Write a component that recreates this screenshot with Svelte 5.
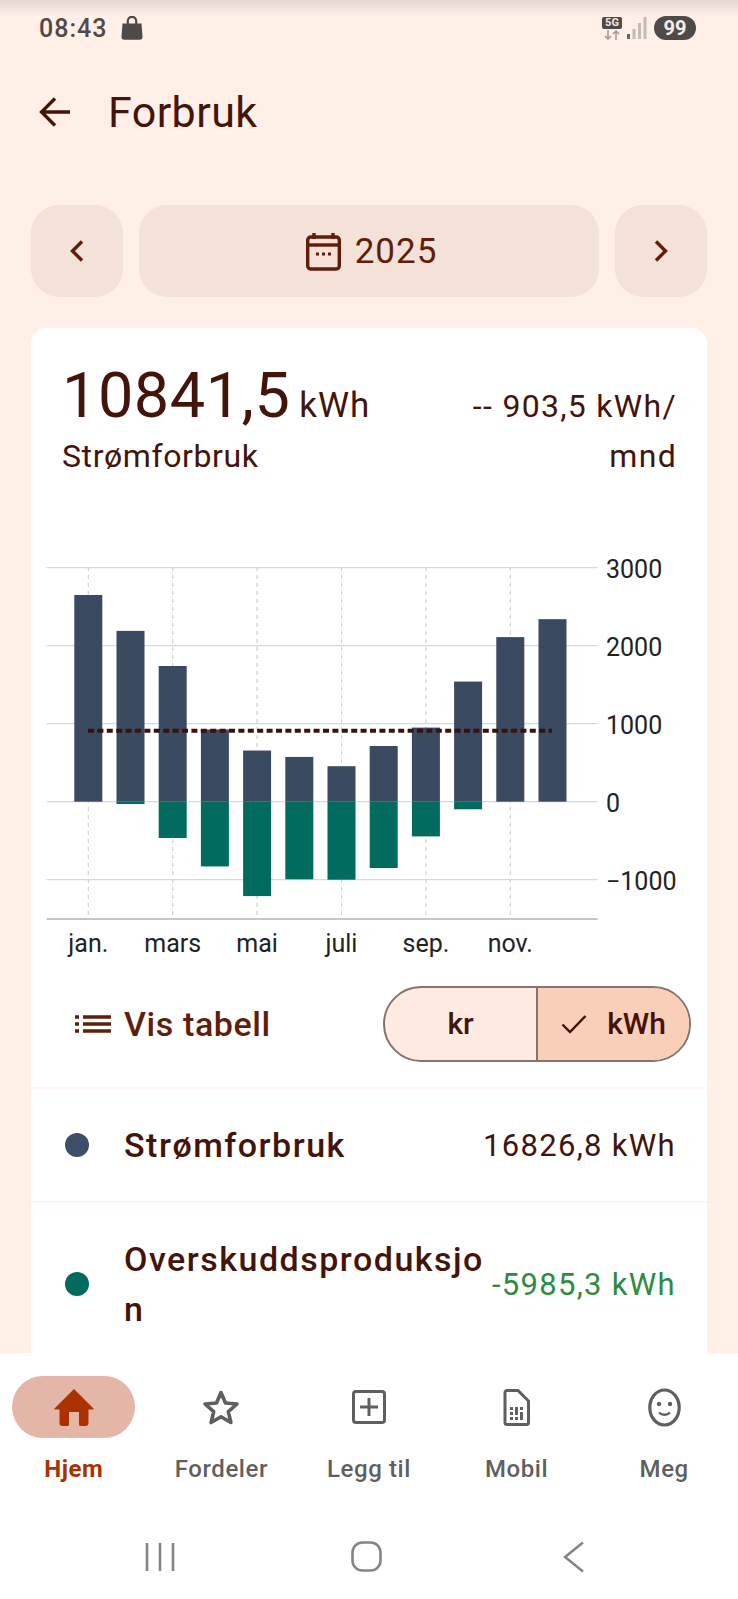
<script>
  // Monthly values in kWh, read off the chart
  const months = [
    { used: 2650, sold: 0, label: 'jan.' },
    { used: 2190, sold: 30 },
    { used: 1740, sold: 465, label: 'mars' },
    { used: 926, sold: 830 },
    { used: 656, sold: 1210, label: 'mai' },
    { used: 574, sold: 995 },
    { used: 455, sold: 1000, label: 'juli' },
    { used: 714, sold: 850 },
    { used: 950, sold: 445, label: 'sep.' },
    { used: 1540, sold: 97 },
    { used: 2110, sold: 0, label: 'nov.' },
    { used: 2340, sold: 0 }
  ]

  const ticks = [3000, 2000, 1000, 0, -1000]
  const zeroY = 261.7
  const perKwh = 0.078
  const firstX = 57.3
  const stepX = 42.2
  const barW = 28
  const avgY = 190.7

  const centerX = (i) => firstX + i * stepX
  const tickY = (v) => zeroY - v * perKwh
  const tickLabel = (v) => (v < 0 ? '−' + Math.abs(v) : String(v))

  const nav = [
    { label: 'Hjem', active: true },
    { label: 'Fordeler' },
    { label: 'Legg til' },
    { label: 'Mobil' },
    { label: 'Meg' }
  ]
</script>

<div class="app">
  <div class="status">
    <span class="time">08:43</span>
    <svg class="bag" viewBox="0 0 22 24" width="22" height="24">
      <path d="M1.500 7.500h19l1 13a3 3 0 0 1-3 3.200H3.500a3 3 0 0 1-3-3.200z" fill="#4f4a47" />
      <path d="M6.800 8V5a4.200 4.200 0 0 1 8.400 0v3" fill="none" stroke="#4f4a47" stroke-width="2.200" />
    </svg>
    <span class="spacer"></span>
    <div class="net">
      <span class="five-g">5G</span>
      <svg viewBox="0 0 20 10" width="20" height="10">
        <path d="M6 0v9M3 6l3 3 3-3M14 10V1M11 4l3-3 3 3" fill="none" stroke="#a39c98" stroke-width="1.600" />
      </svg>
    </div>
    <svg class="signal" viewBox="0 0 20 24" width="20" height="24">
      <rect x="0" y="18" width="3" height="5" fill="#6b6460" />
      <rect x="5.500" y="13" width="3" height="10" fill="#c4bcb7" />
      <rect x="11" y="7" width="3" height="16" fill="#c4bcb7" />
      <rect x="16.500" y="1" width="3" height="22" fill="#c4bcb7" />
    </svg>
    <span class="battery">99</span>
  </div>

  <header class="topbar">
    <svg viewBox="0 0 31 30" width="31" height="30">
      <path d="M31 15H3M16 1.500 2.500 15 16 28.500" fill="none" stroke="#43140a" stroke-width="3.300" />
    </svg>
    <h1>Forbruk</h1>
  </header>

  <div class="date-row">
    <button class="date-btn side" aria-label="Forrige">
      <svg viewBox="0 0 14 22" width="14" height="22">
        <path d="M12 1.500 2.500 11 12 20.500" fill="none" stroke="#5e1e09" stroke-width="3.400" />
      </svg>
    </button>
    <button class="date-btn middle">
      <svg viewBox="0 0 35 39" width="35" height="39">
        <path d="M8 1v6M27 1v6" stroke="#5e1e09" stroke-width="3.400" />
        <rect x="1.700" y="5" width="31.600" height="32" rx="3" fill="none" stroke="#5e1e09" stroke-width="3.400" />
        <path d="M2 13h31" stroke="#5e1e09" stroke-width="3.400" />
        <path d="M10 22h3M16 22h3M22 22h3" stroke="#5e1e09" stroke-width="3" />
      </svg>
      <span>2025</span>
    </button>
    <button class="date-btn side" aria-label="Neste">
      <svg viewBox="0 0 14 22" width="14" height="22">
        <path d="M2 1.500 11.500 11 2 20.500" fill="none" stroke="#5e1e09" stroke-width="3.400" />
      </svg>
    </button>
  </div>

  <main class="card">
    <div class="summary">
      <div class="total">
        <div class="amount"><strong>10841,5</strong> <span>kWh</span></div>
        <div class="caption">Strømforbruk</div>
      </div>
      <div class="average">-- 903,5 kWh/ mnd</div>
    </div>

    <svg class="chart" viewBox="0 0 676 420" width="676" height="420">
      {#each ticks as t}
        <line x1="15.700" x2="566.700" y1={tickY(t)} y2={tickY(t)} stroke="#d8d8d8" stroke-width="1.300" />
        <text x="575" y={tickY(t) + 10} class="tick">{tickLabel(t)}</text>
      {/each}
      {#each months as m, i}
        {#if m.label}
          <line x1={centerX(i)} x2={centerX(i)} y1="27" y2="379" stroke="#cfcfcf" stroke-width="1.200" stroke-dasharray="4 4" />
          <text x={centerX(i)} y="412" text-anchor="middle" class="tick">{m.label}</text>
        {/if}
      {/each}
      <line x1="15.700" x2="566.700" y1="379" y2="379" stroke="#c6c6c6" stroke-width="2" />
      {#each months as m, i}
        <rect x={centerX(i) - barW / 2} y={zeroY - m.used * perKwh} width={barW} height={m.used * perKwh} fill="#3a4a60" />
        <rect x={centerX(i) - barW / 2} y={zeroY} width={barW} height={m.sold * perKwh} fill="#006b5e" />
      {/each}
      <line x1="57" x2="521" y1={avgY} y2={avgY} stroke="#38120e" stroke-width="4" stroke-dasharray="6 3.400" />
    </svg>

    <div class="tools">
      <button class="show-table">
        <svg viewBox="0 0 36 18" width="36" height="18">
          <path d="M0 2h4M0 9h4M0 16h4M8 2h28M8 9h28M8 16h28" stroke="#5e1e09" stroke-width="3.400" />
        </svg>
        <span>Vis tabell</span>
      </button>
      <div class="toggle">
        <span class="seg kr">kr</span>
        <span class="seg kwh">
          <svg viewBox="0 0 26 20" width="26" height="20">
            <path d="M1.500 10.500 9 18 24.500 2" fill="none" stroke="#3f150a" stroke-width="2.400" />
          </svg>
          kWh
        </span>
      </div>
    </div>

    <div class="row">
      <span class="dot navy"></span>
      <span class="name">Strømforbruk</span>
      <span class="value">16826,8 kWh</span>
    </div>
    <div class="row tall">
      <span class="dot teal"></span>
      <span class="name">Overskuddsproduksjo n</span>
      <span class="value green">-5985,3 kWh</span>
    </div>
  </main>

  <nav class="bottom">
    {#each nav as item}
      <div class="nav-item" class:active={item.active}>
        <div class="nav-icon">
          {#if item.label === 'Hjem'}
            <svg viewBox="0 0 40 37" width="40" height="37">
              <path d="M20 0 39.500 19.500a.6.6 0 0 1-.4 1H34.500V34a3 3 0 0 1-3 3h-5a1.500 1.500 0 0 1-1.500-1.500V23H15v12.500a1.500 1.500 0 0 1-1.500 1.500h-5a3 3 0 0 1-3-3V20.500H.9a.6.6 0 0 1-.4-1z" fill="#ab3200" />
            </svg>
          {:else if item.label === 'Fordeler'}
            <svg viewBox="0 0 38 36" width="38" height="36">
              <path d="M19 3.500 23.500 14 35 15 26.300 22.600 28.900 33.500 19 27.700 9.100 33.500 11.700 22.600 3 15 14.500 14z" fill="none" stroke="#5f5f5f" stroke-width="3.600" stroke-linejoin="round" />
            </svg>
          {:else if item.label === 'Legg til'}
            <svg viewBox="0 0 34 34" width="34" height="34">
              <rect x="1.500" y="1.500" width="31" height="31" rx="2.500" fill="none" stroke="#5f5f5f" stroke-width="3" />
              <path d="M17 8v18M8 17h18" stroke="#5f5f5f" stroke-width="3" />
            </svg>
          {:else if item.label === 'Mobil'}
            <svg viewBox="0 0 27 37" width="27" height="37">
              <path d="M4 1.500h11L25.500 12v21.500a2 2 0 0 1-2 2H4a2 2 0 0 1-2-2v-30a2 2 0 0 1 2-2z" fill="none" stroke="#5f5f5f" stroke-width="3" />
              <path d="M7 18h3v3H7zM7 23h3v3H7zM7 28h3v3H7zM12 18h3v8h-3zM12 28h3v3h-3zM17 18h3v3h-3zM17 23h3v8h-3z" fill="#5f5f5f" />
            </svg>
          {:else}
            <svg viewBox="0 0 33 39" width="33" height="39">
              <ellipse cx="16.500" cy="19.500" rx="14.700" ry="17.500" fill="none" stroke="#5f5f5f" stroke-width="3.200" />
              <circle cx="11" cy="16" r="2.200" fill="#5f5f5f" />
              <circle cx="22" cy="16" r="2.200" fill="#5f5f5f" />
              <path d="M11 24.500c3 3 8 3 11 0" fill="none" stroke="#5f5f5f" stroke-width="2.400" />
            </svg>
          {/if}
        </div>
        <span class="nav-label">{item.label}</span>
      </div>
    {/each}
  </nav>

  <div class="sysnav">
    <svg viewBox="0 0 30 30" width="30" height="30">
      <path d="M2 1v28M15 1v28M28 1v28" stroke="#858585" stroke-width="2.600" />
    </svg>
    <svg viewBox="0 0 32 32" width="32" height="32">
      <rect x="1.500" y="1.500" width="28" height="28" rx="10" fill="none" stroke="#858585" stroke-width="2.600" />
    </svg>
    <svg viewBox="0 0 22 32" width="22" height="32">
      <path d="M20 1.500 2 16l18 14.500" fill="none" stroke="#858585" stroke-width="2.600" />
    </svg>
  </div>
</div>

<style>
  :global(body) {
    margin: 0;
    background: #ffefe7;
  }

  .app {
    width: 738px;
    height: 1599px;
    display: flex;
    flex-direction: column;
    overflow: hidden;
    background: #ffefe7;
    font-family: Roboto, sans-serif;
    color: #43140a;
  }

  .status {
    flex: none;
    height: 56px;
    display: flex;
    align-items: center;
    padding: 0 42px 0 39px;
    box-sizing: border-box;
    background: linear-gradient(#e4d8d2, #ffefe7 16px);
  }

  .time {
    font-size: 25px;
    font-weight: 500;
    letter-spacing: 1px;
    color: #4f4a47;
  }

  .bag {
    margin-left: 14px;
  }

  .spacer {
    flex: 1;
  }

  .net {
    display: flex;
    flex-direction: column;
    align-items: center;
    gap: 1px;
    margin-right: 5px;
  }

  .five-g {
    width: 20px;
    height: 12px;
    border-radius: 2px;
    background: #4f4a47;
    color: #f4e8e2;
    font-size: 11px;
    font-weight: 700;
    line-height: 12px;
    text-align: center;
  }

  .signal {
    margin-right: 7px;
  }

  .battery {
    width: 42px;
    height: 24px;
    border-radius: 12px;
    background: #4f4a47;
    color: #f6ece7;
    font-size: 20px;
    font-weight: 700;
    line-height: 24px;
    text-align: center;
  }

  .topbar {
    flex: none;
    height: 112px;
    display: flex;
    align-items: center;
    gap: 38px;
    padding-left: 39px;
  }

  h1 {
    margin: 0;
    font-size: 43px;
    font-weight: 400;
    letter-spacing: 0.4px;
    color: #43140a;
  }

  .date-row {
    flex: none;
    display: grid;
    grid-template-columns: 92px 1fr 92px;
    gap: 16px;
    height: 92px;
    margin: 37px 31px 0;
  }

  .date-btn {
    display: flex;
    align-items: center;
    justify-content: center;
    gap: 14px;
    border: 0;
    padding: 0;
    border-radius: 28px;
    background: #f4e1d8;
    color: #5e1e09;
    font-family: inherit;
    font-size: 35px;
    letter-spacing: 1px;
  }

  .date-btn.middle {
    padding-left: 5px;
  }

  .card {
    flex: 1 1 0;
    min-height: 0;
    margin: 31px 31px 0;
    overflow: hidden;
    border-radius: 16px 16px 0 0;
    background: #fff;
  }

  .summary {
    display: flex;
    justify-content: space-between;
    padding: 43px 30px 0 31px;
    height: 212px;
    box-sizing: border-box;
  }

  .amount {
    height: 50px;
    line-height: 50px;
    white-space: nowrap;
  }

  .amount strong {
    font-size: 63px;
    font-weight: 400;
    letter-spacing: 0.5px;
  }

  .amount span {
    font-size: 35px;
    letter-spacing: 1px;
    margin-left: 5px;
  }

  .caption {
    margin-top: 10px;
    font-size: 32px;
    letter-spacing: 0.6px;
    line-height: 50px;
  }

  .average {
    width: 230px;
    margin-top: 10px;
    font-size: 32px;
    letter-spacing: 1.300px;
    line-height: 50px;
    text-align: right;
  }

  .chart {
    display: block;
  }

  .tick {
    font-size: 25px;
    fill: #222;
    font-family: Roboto, sans-serif;
  }

  .tools {
    height: 129px;
    display: flex;
    align-items: center;
    justify-content: space-between;
    padding: 0 16px 0 44px;
    box-sizing: border-box;
    border-bottom: 2px solid #fff4ee;
  }

  .show-table {
    display: flex;
    align-items: center;
    gap: 13px;
    border: 0;
    padding: 0;
    background: none;
    color: #5e1e09;
    font-family: inherit;
    font-size: 34px;
    font-weight: 500;
    letter-spacing: 0.6px;
  }

  .toggle {
    display: grid;
    grid-template-columns: 151px 1fr;
    width: 308px;
    height: 76px;
    box-sizing: border-box;
    border: 2px solid #857370;
    border-radius: 38px;
    overflow: hidden;
    background: #ffebe1;
    font-size: 30px;
    font-weight: 500;
  }

  .seg {
    display: flex;
    align-items: center;
    justify-content: center;
  }

  .kwh {
    gap: 20px;
    background: #facfb9;
    border-left: 2px solid #857370;
  }

  .row {
    display: flex;
    align-items: center;
    min-height: 112px;
    padding: 0 31px 0 34px;
    border-bottom: 2px solid #fff4ee;
  }

  .row.tall {
    padding-top: 25px;
    padding-bottom: 30px;
    border-bottom: 0;
  }

  .dot {
    flex: none;
    width: 24px;
    height: 24px;
    border-radius: 50%;
    margin-right: 35px;
  }

  .navy {
    background: #3f4f6b;
  }

  .teal {
    background: #006b5e;
  }

  .name {
    flex: 1;
    min-width: 0;
    font-size: 34px;
    font-weight: 500;
    line-height: 50px;
    letter-spacing: 1.500px;
  }

  .row.tall .name {
    width: 362px;
    flex: none;
  }

  .value {
    margin-left: auto;
    font-size: 31px;
    letter-spacing: 1.300px;
    white-space: nowrap;
  }

  .green {
    color: #2e8b3f;
  }

  .bottom {
    flex: none;
    height: 147px;
    display: grid;
    grid-template-columns: repeat(5, 1fr);
    padding-top: 23px;
    box-sizing: border-box;
    background: #fff;
  }

  .nav-item {
    display: flex;
    flex-direction: column;
    align-items: center;
    color: #5f5f5f;
  }

  .nav-icon {
    width: 123px;
    height: 62px;
    display: flex;
    align-items: center;
    justify-content: center;
    border-radius: 31px;
  }

  .active .nav-icon {
    background: #e3b6a8;
  }

  .nav-label {
    margin-top: 16px;
    font-size: 24px;
    font-weight: 500;
    letter-spacing: 0.6px;
    line-height: 30px;
  }

  .active .nav-label {
    color: #ab3200;
    font-weight: 700;
  }

  .sysnav {
    flex: none;
    height: 99px;
    display: grid;
    grid-template-columns: repeat(3, 207px);
    justify-items: center;
    align-items: center;
    padding: 14px 0 0 56.500px;
    box-sizing: border-box;
    background: #fff;
  }
</style>
